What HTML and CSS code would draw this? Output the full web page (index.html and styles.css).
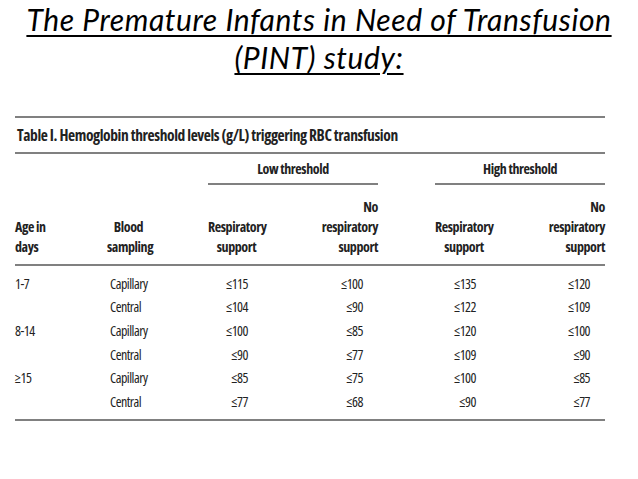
FILE: index.html
```html
<!DOCTYPE html>
<html>
<head>
<meta charset="utf-8">
<link rel="stylesheet" href="styles.css">
</head>
<body>
<h1 class="title"><span>The Premature Infants in Need of Transfusion</span><br><span>(PINT) study:</span></h1>
<table class="tbl">
  <colgroup>
    <col class="w-age"><col class="w-samp"><col class="w-sp1"><col class="w-c"><col class="w-d"><col class="w-sp2"><col class="w-e"><col class="w-f">
  </colgroup>
  <thead>
    <tr class="cap"><th colspan="8">Table I. Hemoglobin threshold levels (g/L) triggering RBC transfusion</th></tr>
    <tr class="grp">
      <th colspan="3"></th>
      <th colspan="2" class="ruled">Low threshold</th>
      <th></th>
      <th colspan="2" class="ruled">High threshold</th>
    </tr>
    <tr class="hdr">
      <th class="l">Age in<br>days</th>
      <th class="c">Blood<br>sampling</th>
      <th></th>
      <th class="c">Respiratory<br>support</th>
      <th class="r">No<br>respiratory<br>support</th>
      <th></th>
      <th class="c">Respiratory<br>support</th>
      <th class="r">No<br>respiratory<br>support</th>
    </tr>
  </thead>
  <tbody>
    <tr class="first"><td>1-7</td><td class="s">Capillary</td><td></td><td class="n1">≤115</td><td class="n2">≤100</td><td></td><td class="n1">≤135</td><td class="n2">≤120</td></tr>
    <tr><td></td><td class="s">Central</td><td></td><td class="n1">≤104</td><td class="n2">≤90</td><td></td><td class="n1">≤122</td><td class="n2">≤109</td></tr>
    <tr><td>8-14</td><td class="s">Capillary</td><td></td><td class="n1">≤100</td><td class="n2">≤85</td><td></td><td class="n1">≤120</td><td class="n2">≤100</td></tr>
    <tr><td></td><td class="s">Central</td><td></td><td class="n1">≤90</td><td class="n2">≤77</td><td></td><td class="n1">≤109</td><td class="n2">≤90</td></tr>
    <tr><td>≥15</td><td class="s">Capillary</td><td></td><td class="n1">≤85</td><td class="n2">≤75</td><td></td><td class="n1">≤100</td><td class="n2">≤85</td></tr>
    <tr class="last"><td></td><td class="s">Central</td><td></td><td class="n1">≤77</td><td class="n2">≤68</td><td></td><td class="n1">≤90</td><td class="n2">≤77</td></tr>
  </tbody>
</table>
</body>
</html>
```
FILE: styles.css
```css
html, body { margin: 0; padding: 0; background: #fff; }
body { width: 638px; height: 479px; overflow: hidden; }

.title {
  margin: 0;
  padding-top: 0;
  text-align: center;
  font-family: "Lato", "Open Sans", sans-serif;
  font-style: italic;
  font-weight: 400;
  font-size: 30px;
  letter-spacing: 0.6px;
  line-height: 38px;
  color: #000;
}
.title span {
  text-decoration: underline;
  text-decoration-thickness: 2px;
  text-underline-offset: 4px;
}

.tbl {
  margin: 0 0 0 15px;
  margin-top: 40px;
  width: 590px;
  table-layout: fixed;
  border-collapse: collapse;
  font-family: "Open Sans", sans-serif;
  font-stretch: 75%;
  color: #222;
  font-size: 14px;
}
.w-age { width: 92px; }
.w-samp { width: 43px; }
.w-sp1 { width: 58px; }
.w-c { width: 57px; }
.w-d { width: 113px; }
.w-sp2 { width: 57px; }
.w-e { width: 58px; }
.w-f { width: 112px; }

.tbl th, .tbl td { padding: 0; white-space: nowrap; }

.cap th {
  border-top: 2px solid #808080;
  border-bottom: 2px solid #808080;
  height: 34px;
  text-align: left;
  font-size: 15.5px;
  letter-spacing: -0.4px;
  font-weight: 700;
  padding-left: 2px;
}
.grp th {
  height: 29px;
  font-weight: 700;
  font-size: 14px;
  letter-spacing: -0.4px;
  text-align: center;
}
.grp th.ruled { border-bottom: 2px solid #808080; }
.hdr th {
  height: 72px;
  vertical-align: bottom;
  padding-bottom: 7px;
  font-weight: 700;
  font-size: 14px;
  letter-spacing: -0.4px;
  line-height: 20px;
  border-bottom: 2px solid #808080;
}
.hdr th.l { text-align: left; }
.hdr th.c { text-align: center; }
.hdr th.r { text-align: right; }

.tbl td { height: 23.6px; line-height: 20px; font-size: 14px; font-weight: 500; letter-spacing: -0.5px; }
.tbl td.s { padding-left: 3px; }
.tbl td.n1 { text-align: right; padding-right: 17px; }
.tbl td.n2 { text-align: right; padding-right: 15px; }
.tbl tr.first td { padding-top: 6px; }
.tbl tr.last td { padding-bottom: 5px; border-bottom: 2px solid #808080; }
```
